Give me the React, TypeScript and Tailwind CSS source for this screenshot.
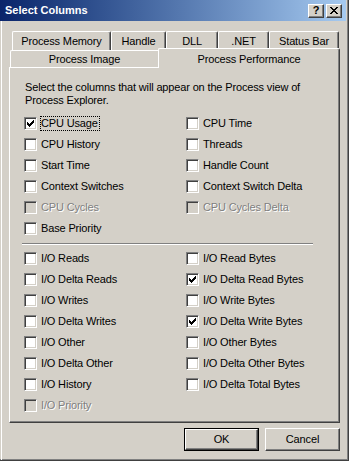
import React from 'react';

const face = 'bg-[#d4d0c8]';

type Item = { label: string; checked?: boolean; disabled?: boolean; focus?: boolean };

const groupOne: [Item, Item | null][] = [
  [{ label: 'CPU Usage', checked: true, focus: true }, { label: 'CPU Time' }],
  [{ label: 'CPU History' }, { label: 'Threads' }],
  [{ label: 'Start Time' }, { label: 'Handle Count' }],
  [{ label: 'Context Switches' }, { label: 'Context Switch Delta' }],
  [{ label: 'CPU Cycles', disabled: true }, { label: 'CPU Cycles Delta', disabled: true }],
  [{ label: 'Base Priority' }, null],
];

const groupTwo: [Item, Item | null][] = [
  [{ label: 'I/O Reads' }, { label: 'I/O Read Bytes' }],
  [{ label: 'I/O Delta Reads' }, { label: 'I/O Delta Read Bytes', checked: true }],
  [{ label: 'I/O Writes' }, { label: 'I/O Write Bytes' }],
  [{ label: 'I/O Delta Writes' }, { label: 'I/O Delta Write Bytes', checked: true }],
  [{ label: 'I/O Other' }, { label: 'I/O Other Bytes' }],
  [{ label: 'I/O Delta Other' }, { label: 'I/O Delta Other Bytes' }],
  [{ label: 'I/O History' }, { label: 'I/O Delta Total Bytes' }],
  [{ label: 'I/O Priority', disabled: true }, null],
];

function CheckMark() {
  const cols = [2, 3, 4, 3, 2, 1, 0];
  return (
    <svg width="7" height="7" viewBox="0 0 7 7" shapeRendering="crispEdges">
      {cols.map((y, x) => (
        <rect key={x} x={x} y={y} width="1" height="3" fill="#000" />
      ))}
    </svg>
  );
}

function Check({ item }: { item: Item }) {
  return (
    <div className="flex items-center h-[21px]">
      <div
        className={`w-[13px] h-[13px] shrink-0 flex items-center justify-center border border-t-[#808080] border-l-[#808080] border-b-white border-r-white shadow-[inset_1px_1px_0_#404040,inset_-1px_-1px_0_#d4d0c8] ${
          item.disabled ? face : 'bg-white'
        }`}
      >
        {item.checked && <CheckMark />}
      </div>
      <span
        className={`ml-[3px] pl-0 pr-[1px] leading-[13px] border border-dotted ${
          item.focus ? 'border-black' : 'border-transparent'
        } ${item.disabled ? 'text-[#808080] [text-shadow:1px_1px_0_#ffffff]' : 'text-black'}`}
      >
        {item.label}
      </span>
    </div>
  );
}

function Group({ rows }: { rows: [Item, Item | null][] }) {
  return (
    <div className="grid grid-cols-[162px_1fr] pl-[14px]">
      {rows.map(([a, b], i) => (
        <React.Fragment key={i}>
          <Check item={a} />
          {b ? <Check item={b} /> : <div className="h-[21px]" />}
        </React.Fragment>
      ))}
    </div>
  );
}

function Tab({ label, width }: { label: string; width: number }) {
  return (
    <div
      className="h-[19px] flex items-center justify-center border-l border-t border-white border-r border-r-[#404040] rounded-t-[2px] shadow-[inset_-1px_0_0_#808080] text-black"
      style={{ width }}
    >
      {label}
    </div>
  );
}

function Button({ label, isDefault }: { label: string; isDefault?: boolean }) {
  return (
    <div className={`w-[75px] h-[23px] ${isDefault ? 'border border-black' : ''}`}>
      <div className="w-full h-full flex items-center justify-center border border-t-white border-l-white border-r-[#404040] border-b-[#404040] shadow-[inset_-1px_-1px_0_#808080] text-black">
        {label}
      </div>
    </div>
  );
}

export default function App() {
  return (
    <div
      className={`w-[349px] h-[461px] ${face} flex flex-col border-r border-b border-[#404040] shadow-[inset_-1px_-1px_0_#808080] text-[11px] tracking-[-0.15px] overflow-hidden`}
      style={{ fontFamily: '"Liberation Sans", Arial, sans-serif' }}
    >
      <div className="h-[21px] mr-[2px] flex items-center bg-gradient-to-r from-[#0a246a] to-[#a6caf0] pl-[5px] pr-[4px]">
        <span className="text-white font-bold text-[11px] leading-none flex-1 tracking-normal">Select Columns</span>
        <div className="flex gap-[2px]">
          <div className="w-[16px] h-[14px] flex items-center justify-center bg-[#d4d0c8] border border-t-white border-l-white border-r-[#404040] border-b-[#404040] shadow-[inset_-1px_-1px_0_#808080] font-bold text-[11px] leading-none text-black">
            ?
          </div>
          <div className="w-[16px] h-[14px] flex items-center justify-center bg-[#d4d0c8] border border-t-white border-l-white border-r-[#404040] border-b-[#404040] shadow-[inset_-1px_-1px_0_#808080]">
            <svg width="8" height="7" viewBox="0 0 8 7" shapeRendering="crispEdges">
              {[0, 1, 2, 3, 4, 5, 6].map((y) => (
                <React.Fragment key={y}>
                  <rect x={y} y={y} width="2" height="1" fill="#000" />
                  <rect x={6 - y} y={y} width="2" height="1" fill="#000" />
                </React.Fragment>
              ))}
            </svg>
          </div>
        </div>
      </div>

      <div className="flex-1 border-l border-white ml-[1px] pl-[7px] pt-[10px] flex flex-col">
        <div className="flex ml-[3px] gap-0">
          <Tab label="Process Memory" width={99} />
          <Tab label="Handle" width={55} />
          <Tab label="DLL" width={52} />
          <Tab label=".NET" width={51} />
          <Tab label="Status Bar" width={70} />
        </div>
        <div className="flex items-end h-[17px] ml-[1px]">
          <div className="w-[148px] h-[17px] flex items-center justify-center border-l border-t border-white rounded-tl-[2px] text-black">
            Process Image
          </div>
          <div className="relative z-10 w-[182px] h-[20px] -mb-[1px] flex items-start justify-center pt-[2px] bg-[#d4d0c8] border-l border-t border-white border-r border-r-[#404040] rounded-t-[2px] shadow-[inset_-1px_0_0_#808080] text-black">
            Process Performance
          </div>
        </div>

        <div className="w-[331px] h-[356px] border border-t-white border-l-white border-r-[#404040] border-b-[#404040] shadow-[inset_-1px_-1px_0_#808080] flex flex-col">
          <p className="pl-[15px] pt-[13px] leading-[13px] text-black">
            Select the columns that will appear on the Process view of
            <br />
            Process Explorer.
          </p>
          <div className="mt-[6px]">
            <Group rows={groupOne} />
          </div>
          <div className="ml-[12px] w-[291px] mt-[4px] h-[2px] border-t border-t-[#808080] border-b border-b-white" />
          <div className="mt-[3px]">
            <Group rows={groupTwo} />
          </div>
        </div>

        <div className="w-[331px] mt-[5px] flex justify-end gap-[6px]">
          <Button label="OK" isDefault />
          <Button label="Cancel" />
        </div>
      </div>
    </div>
  );
}
